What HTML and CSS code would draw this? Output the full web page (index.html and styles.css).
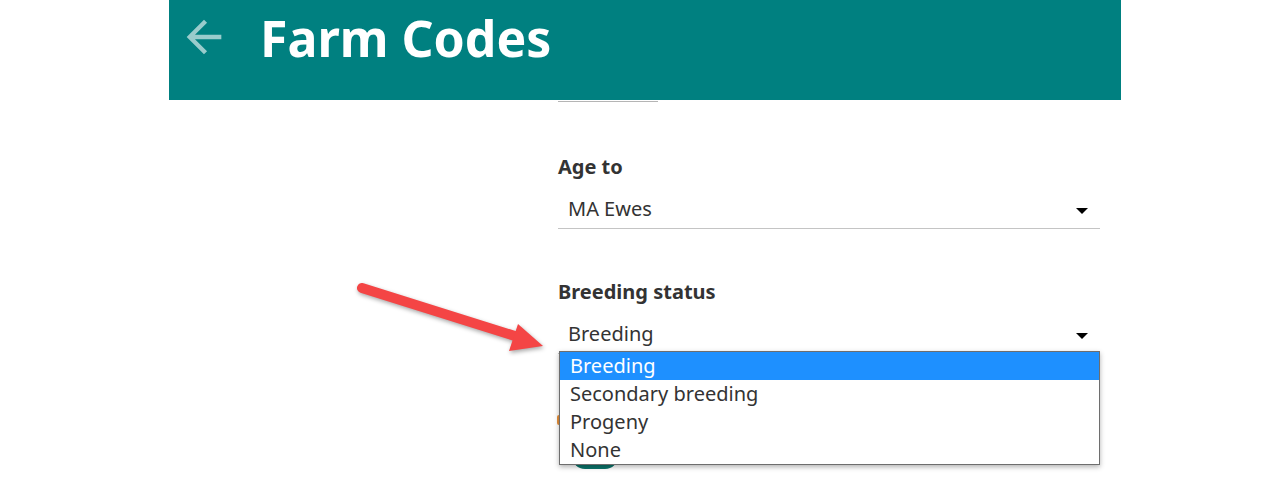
FILE: index.html
```html
<!DOCTYPE html>
<html lang="en">
<head>
<meta charset="utf-8">
<title>Farm Codes</title>
<link rel="stylesheet" href="styles.css">
</head>
<body>
<div class="page">
  <header class="topbar">
    <button class="back" aria-label="Back">
      <svg viewBox="0 0 24 24" width="52" height="52"><path d="M20 11H7.83l5.59-5.59L12 4l-8 8 8 8 1.41-1.41L7.83 13H20v-2z"/></svg>
    </button>
    <h1 class="title">Farm Codes</h1>
  </header>

  <main class="form">
    <div class="stub"></div>

    <div class="field">
      <label class="label">Age to</label>
      <div class="select">MA Ewes<span class="caret"></span></div>
    </div>

    <div class="field">
      <label class="label">Breeding status</label>
      <div class="select">Breeding<span class="caret"></span>
        <ul class="options">
          <li class="option selected">Breeding</li>
          <li class="option">Secondary breeding</li>
          <li class="option">Progeny</li>
          <li class="option">None</li>
        </ul>
      </div>
    </div>

    <div class="field toggle-field">
      <span class="mark"></span>
      <span class="toggle"></span>
    </div>
  </main>

  <svg class="pointer" width="220" height="100" viewBox="0 0 220 100">
    <g class="pointer-shape">
      <line x1="22" y1="18" x2="178" y2="67" stroke="#f44545" stroke-width="10" stroke-linecap="round"/>
      <polygon points="178,54 169,81 203,76" fill="#f44545"/>
    </g>
  </svg>
</div>
</body>
</html>
```

FILE: styles.css
```css
* { box-sizing: border-box; }

body {
  margin: 0;
  background: #fff;
  font-family: "Noto Sans", "Open Sans", sans-serif;
  color: #333;
  overflow: hidden;
}

.page {
  position: relative;
  margin-left: 169px;
  width: 952px;
  height: 478px;
}

.topbar {
  height: 100px;
  background: #008080;
  display: flex;
  align-items: flex-start;
  padding: 8px 0 0 9px;
}

.back {
  margin: 3px 30px 0 0;
  padding: 0;
  border: 0;
  background: none;
  width: 52px;
  height: 52px;
  display: flex;
}

.back svg { fill: rgba(255, 255, 255, 0.6); }

.title {
  margin: 0;
  font-size: 50px;
  line-height: 60px;
  font-weight: 700;
  color: #fff;
}

.form {
  padding: 0 21px 0 389px;
}

.stub {
  width: 100px;
  height: 2px;
  border-bottom: 1px solid #b5b5b5;
  margin-bottom: 51px;
}

.field { margin-bottom: 49px; }

.label {
  display: block;
  font-size: 20px;
  line-height: 28px;
  font-weight: 700;
  color: #333;
  margin-bottom: 14px;
}

.select {
  position: relative;
  font-size: 20px;
  line-height: 28px;
  padding: 0 40px 5px 10px;
  border-bottom: 1px solid #c4c4c4;
  color: #333;
}

.caret {
  position: absolute;
  right: 12px;
  top: 13px;
  width: 0;
  height: 0;
  border-left: 6px solid transparent;
  border-right: 6px solid transparent;
  border-top: 6px solid #000;
}

.options {
  position: absolute;
  z-index: 5;
  top: 31px;
  left: 1px;
  right: 0;
  margin: 0;
  padding: 0;
  list-style: none;
  background: #fff;
  border: 1px solid #6e6e6e;
  box-shadow: 0 2px 5px rgba(0, 0, 0, 0.3);
}

.option {
  padding-left: 10px;
  font-size: 20px;
  line-height: 28px;
  color: #333;
}

.option.selected {
  background: #1e90ff;
  color: #fff;
}

.toggle-field {
  display: flex;
  flex-direction: column;
  align-items: flex-start;
  padding-top: 12px;
}

.mark {
  width: 10px;
  height: 10px;
  margin-left: -1px;
  background: #e8913a;
  border-radius: 2px;
}

.toggle {
  margin: 18px 0 0 14px;
  width: 46px;
  height: 26px;
  border-radius: 13px;
  background: #0b766c;
}

.pointer {
  position: absolute;
  left: 171px;
  top: 270px;
  z-index: 10;
  overflow: visible;
}

.pointer-shape {
  filter: drop-shadow(1px 2px 2px rgba(0, 0, 0, 0.35));
}
```
